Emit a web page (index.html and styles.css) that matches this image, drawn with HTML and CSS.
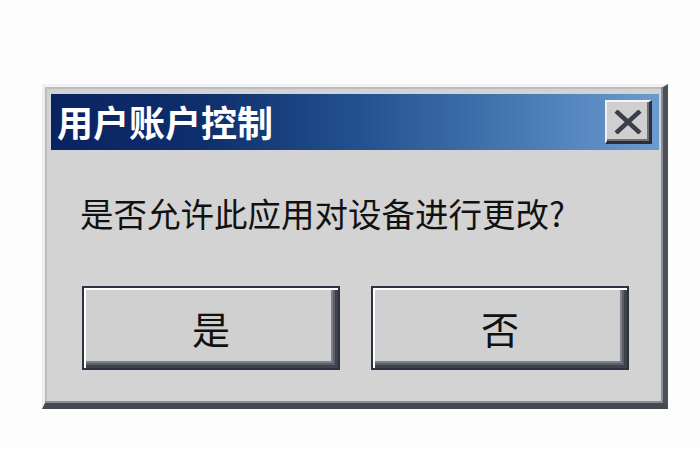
FILE: index.html
```html
<!DOCTYPE html>
<html lang="zh-CN">
<head>
<meta charset="utf-8">
<title>用户账户控制</title>
<link rel="stylesheet" href="styles.css">
</head>
<body>
<div class="stage">
  <div class="dialog">
    <div class="titlebar">
      <span class="title">用户账户控制</span>
      <button class="close" aria-label="关闭">
        <svg width="28" height="24" viewBox="0 0 28 24">
          <path d="M2 1 L26 23 M26 1 L2 23" stroke="#3c3f48" stroke-width="4.5" fill="none"/>
        </svg>
      </button>
    </div>
    <p class="message">是否允许此应用对设备进行更改?</p>
    <div class="actions">
      <button class="btn">是</button>
      <button class="btn">否</button>
    </div>
  </div>
</div>
</body>
</html>
```
FILE: styles.css
```css
html, body {
  margin: 0;
  background: #fdfdfd;
}

.stage {
  padding: 84px 0 0 42px;
}

.dialog {
  box-sizing: border-box;
  width: 626px;
  height: 325px;
  background: #d3d3d3;
  border-top: 3px solid #f2f2f2;
  border-left: 3px solid #eeeeee;
  border-right: 5px solid #4c5059;
  border-bottom: 6px solid #454952;
  box-shadow: inset -2px -2px 0 #8a8d94, inset 2px 2px 0 #bdbdbd;
  padding: 7px 4px 0 6px;
  font-family: "Noto Sans CJK SC", "Noto Sans", sans-serif;
}

.titlebar {
  height: 56px;
  display: flex;
  align-items: center;
  justify-content: space-between;
  padding-left: 6px;
  background: linear-gradient(90deg, #0a2360 0%, #0f2e6c 25%, #22508e 50%, #4576b0 75%, #6c9bcf 100%);
}

.title {
  color: #ffffff;
  font-size: 36px;
  font-weight: 600;
  line-height: 40px;
  margin-top: -2px;
}

.close {
  box-sizing: border-box;
  width: 47px;
  height: 44px;
  margin-right: 7px;
  padding: 0;
  display: flex;
  align-items: center;
  justify-content: center;
  background: #cfcfcf;
  border: 0;
  border-top: 2px solid #f4f4f4;
  border-left: 2px solid #f0f0f0;
  border-right: 3px solid #2c2f38;
  border-bottom: 3px solid #2a2d36;
  box-shadow: inset -2px -2px 0 #6d7078;
}

.message {
  margin: 43px 0 0 29px;
  font-size: 33.5px;
  line-height: 40px;
  color: #111111;
}

.actions {
  display: flex;
  gap: 31px;
  margin-top: 53px;
  padding-left: 31px;
}

.btn {
  box-sizing: border-box;
  width: 258px;
  height: 84px;
  padding: 0;
  background: #d0d0d0;
  border: 2px solid #2d3140;
  box-shadow:
    inset 2px 2px 0 #ffffff,
    inset -3px -3px 0 #3f434d,
    inset -5px -5px 0 #5a5e66,
    inset -7px -7px 0 #7d8088;
  font-family: "Noto Sans CJK SC", "Noto Sans", sans-serif;
  font-size: 38px;
  line-height: 40px;
  color: #111111;
}
```
